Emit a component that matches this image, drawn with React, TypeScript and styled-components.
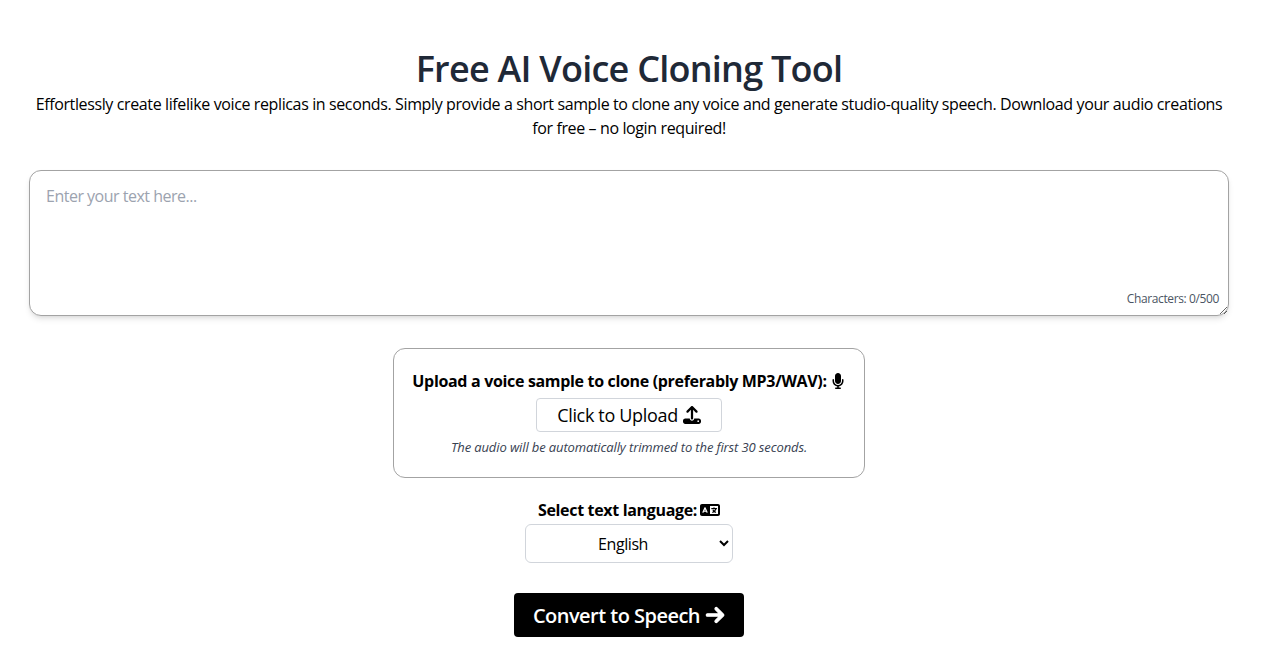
import { createGlobalStyle, styled } from "styled-components";
import { FaArrowRight, FaLanguage, FaMicrophone, FaUpload } from "react-icons/fa6";

const GlobalStyle = createGlobalStyle`
  * { box-sizing: border-box; }
  body {
    margin: 0;
    background: #fff;
    font-family: "Open Sans", "Noto Sans", sans-serif;
    color: #000;
  }
`;

const Page = styled.main`
  display: flex;
  flex-direction: column;
  align-items: center;
  padding: 49px 32px 16px 29px;
`;

const Title = styled.h1`
  margin: 0 0 3px;
  font-size: 36px;
  line-height: 40px;
  font-weight: 600;
  color: #1f2937;
  text-align: center;
  letter-spacing: -0.76px;
`;

const Intro = styled.p`
  margin: 0 0 30px;
  font-size: 16px;
  line-height: 24px;
  text-align: center;
  letter-spacing: -0.38px;
`;

const TextBox = styled.div`
  position: relative;
  width: 1200px;
  height: 146px;
  margin-bottom: 32px;
`;

const TextInput = styled.textarea`
  display: block;
  width: 100%;
  height: 100%;
  padding: 12px 16px;
  border: 1px solid #a3a3a3;
  border-radius: 12px;
  outline: none;
  font: inherit;
  font-size: 16px;
  line-height: 26px;
  letter-spacing: -0.5px;
  box-shadow: 0 4px 6px -1px rgba(0, 0, 0, 0.1), 0 2px 4px -2px rgba(0, 0, 0, 0.1);
  &::placeholder { color: #9ca3af; }
`;

const Counter = styled.span`
  position: absolute;
  right: 10px;
  bottom: 9px;
  font-size: 12px;
  line-height: 16px;
  color: #4b5563;
  letter-spacing: -0.38px;
`;

const UploadCard = styled.section`
  display: flex;
  flex-direction: column;
  align-items: center;
  width: 472px;
  height: 130px;
  padding-top: 20px;
  margin-bottom: 20px;
  border: 1px solid #a3a3a3;
  border-radius: 12px;
`;

const FieldLabel = styled.label`
  display: flex;
  align-items: center;
  gap: 3px;
  font-size: 16px;
  line-height: 24px;
  font-weight: 700;
  letter-spacing: -0.33px;
  white-space: nowrap;
`;

const UploadButton = styled.button`
  display: flex;
  align-items: center;
  justify-content: center;
  gap: 5px;
  width: 186px;
  height: 34px;
  margin-top: 5px;
  background: #fff;
  border: 1px solid #d1d5db;
  border-radius: 4px;
  color: #000;
  font: inherit;
  font-size: 18px;
  letter-spacing: -0.33px;
`;

const Hint = styled.p`
  margin: 6px 0 0;
  font-size: 13px;
  line-height: 18px;
  font-style: italic;
  color: #374151;
  letter-spacing: -0.12px;
`;

const LanguageSelect = styled.select`
  width: 208px;
  height: 39px;
  margin-top: 2px;
  margin-bottom: 30px;
  padding: 0 4px;
  background: #fff;
  border: 1px solid #d1d5db;
  border-radius: 6px;
  color: #000;
  font: inherit;
  font-size: 16px;
  text-align: center;
  letter-spacing: -0.42px;
`;

const ConvertButton = styled.button`
  display: flex;
  align-items: center;
  justify-content: center;
  gap: 5px;
  width: 230px;
  height: 44px;
  background: #000;
  border: none;
  border-radius: 4px;
  color: #fff;
  font: inherit;
  font-size: 20px;
  font-weight: 600;
  letter-spacing: -0.52px;
`;

export default function App() {
  return (
    <>
      <GlobalStyle />
      <Page>
        <Title>Free AI Voice Cloning Tool</Title>
        <Intro>
          Effortlessly create lifelike voice replicas in seconds. Simply provide a short sample to
          clone any voice and generate studio-quality speech. Download your audio creations
          <br />
          for free – no login required!
        </Intro>
        <TextBox>
          <TextInput placeholder="Enter your text here..." />
          <Counter>Characters: 0/500</Counter>
        </TextBox>
        <UploadCard>
          <FieldLabel>
            Upload a voice sample to clone (preferably MP3/WAV): <FaMicrophone size={16} />
          </FieldLabel>
          <UploadButton>
            Click to Upload <FaUpload size={18} />
          </UploadButton>
          <Hint>The audio will be automatically trimmed to the first 30 seconds.</Hint>
        </UploadCard>
        <FieldLabel>
          Select text language: <FaLanguage size={20} />
        </FieldLabel>
        <LanguageSelect defaultValue="English">
          <option>English</option>
        </LanguageSelect>
        <ConvertButton>
          Convert to Speech <FaArrowRight size={20} stroke="currentColor" strokeWidth={30} />
        </ConvertButton>
      </Page>
    </>
  );
}
